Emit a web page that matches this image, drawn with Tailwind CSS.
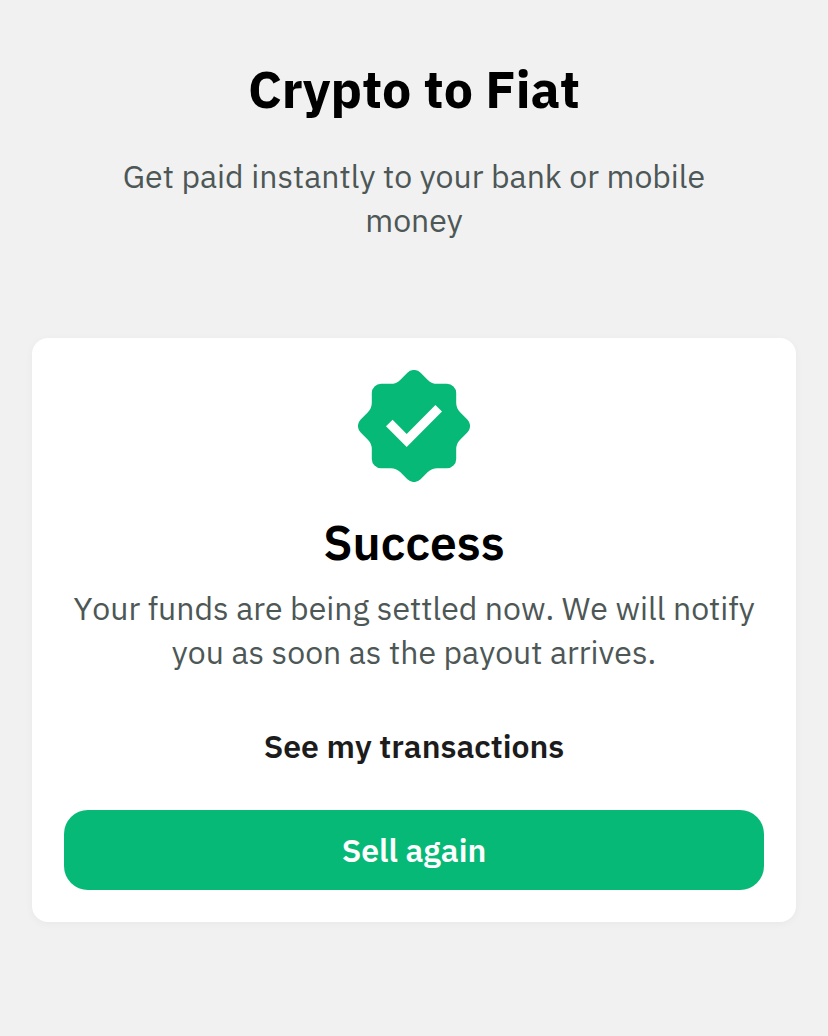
<!DOCTYPE html>
<html lang="en">
<head>
<meta charset="utf-8">
<title>Crypto to Fiat</title>
<script src="https://cdn.jsdelivr.net/npm/@tailwindcss/browser@4"></script>
</head>
<body class="min-h-screen bg-[#f1f1f1] px-8 pt-[55px] font-['IBM_Plex_Sans','Noto_Sans',sans-serif] text-black [font-kerning:none]">
  <header class="flex flex-col items-center text-center whitespace-nowrap">
    <h1 class="text-[52px] leading-[68px] font-bold"><span>Crypto to Fiat</span></h1>
    <p class="mt-[31px] text-[32px] leading-[44px] text-[#4d5756]"><span>Get paid instantly to your bank or mobile</span><br><span>money</span></p>
  </header>
  <main class="mt-24 flex h-[584px] flex-col items-center rounded-2xl bg-white px-8 pt-8 text-center whitespace-nowrap shadow-[0_2px_8px_rgba(0,0,0,0.04)]">
    <svg class="size-28" viewBox="0 0 112 112"><path fill="#07b977" d="M49.4 2.7A9.3 9.3 0 0 1 62.6 2.7L69.8 9.9A13.5 13.5 0 0 0 79.3 13.8H88.9A9.3 9.3 0 0 1 98.2 23.1V32.7A13.5 13.5 0 0 0 102.1 42.2L109.3 49.4A9.3 9.3 0 0 1 109.3 62.6L102.1 69.8A13.5 13.5 0 0 0 98.2 79.3V88.9A9.3 9.3 0 0 1 88.9 98.2H79.3A13.5 13.5 0 0 0 69.8 102.1L62.6 109.3A9.3 9.3 0 0 1 49.4 109.3L42.2 102.1A13.5 13.5 0 0 0 32.7 98.2H23.1A9.3 9.3 0 0 1 13.8 88.9V79.3A13.5 13.5 0 0 0 9.9 69.8L2.7 62.6A9.3 9.3 0 0 1 2.7 49.4L9.9 42.2A13.5 13.5 0 0 0 13.8 32.7V23.1A9.3 9.3 0 0 1 23.1 13.8H32.7A13.5 13.5 0 0 0 42.2 9.9Z"/><path d="M28 56.3L34.6 49.8L48.7 63.9L77.4 35.1L84 41.4L48.7 77Z" fill="#fff"/></svg>
    <h2 class="mt-[30px] text-[48px] leading-[60px] font-semibold"><span>Success</span></h2>
    <p class="mt-[14px] text-[32px] leading-[44px] text-[#4d5756]"><span>Your funds are being settled now. We will notify</span><br><span>you as soon as the payout arrives.</span></p>
    <a class="mt-[50px] text-[32px] leading-[44px] font-semibold text-[#1c1c1c]"><span>See my transactions</span></a>
    <button class="mt-[42px] h-20 w-full shrink-0 rounded-3xl bg-[#07b977] text-[32px] font-semibold text-white"><span>Sell again</span></button>
  </main>
</body>
</html>
